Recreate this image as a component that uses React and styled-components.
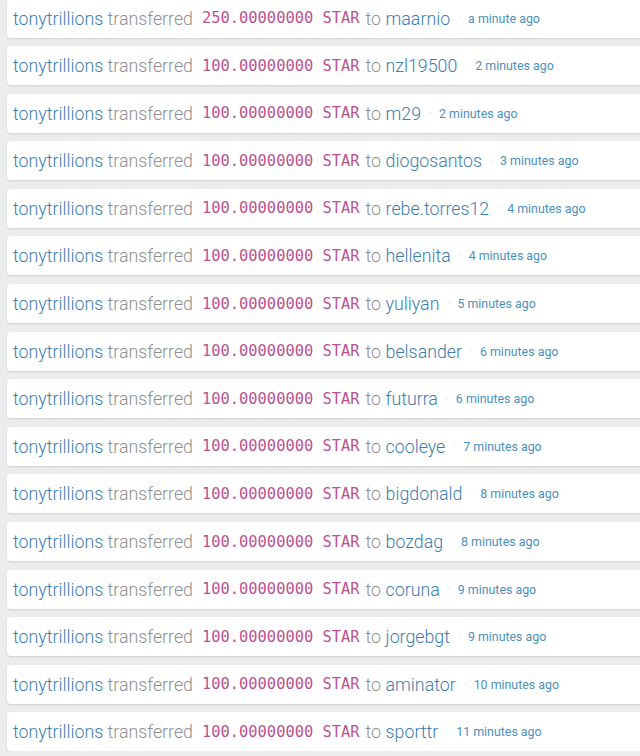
import React from "react";
import styled, { createGlobalStyle } from "styled-components";

const Global = createGlobalStyle`
  html, body { margin: 0; padding: 0; background: #ececec; }
  body { overflow: hidden; }
`;

const List = styled.div`
  display: flex;
  flex-direction: column;
  gap: 8.6px;
  padding: 0 0 0 7px;
  margin-top: -1.5px;
  width: 700px;
`;

const Card = styled.div`
  display: flex;
  align-items: center;
  height: 39px;
  padding-left: 6px;
  background: #fff;
  border-radius: 4px;
  box-shadow: 0 1px 2px rgba(0, 0, 0, 0.12);
  font-family: Roboto, "Liberation Sans", sans-serif;
  font-weight: 300;
  font-size: 17.8px;
  white-space: nowrap;
`;

const User = styled.span`
  color: #3a7db0;
`;

const Muted = styled.span`
  color: #8f8f8f;
  margin-right: ${(p) => (p.$gap ? "4.5px" : "0")};
`;

const Amount = styled.span`
  font-family: "DejaVu Sans Mono", "Liberation Mono", monospace;
  font-weight: 400;
  font-size: 15.4px;
  color: #bb5290;
  margin: 0 6px 0 9px;
`;

const Dot = styled.span`
  color: #c8c8c8;
  font-size: 12px;
  margin: 0 7px 0 8px;
`;

const Time = styled.span`
  color: #4a90c0;
  font-weight: 400;
  font-size: 12.4px;
`;

const rows = [
  ["250.00000000", "maarnio", "a minute ago"],
  ["100.00000000", "nzl19500", "2 minutes ago"],
  ["100.00000000", "m29", "2 minutes ago"],
  ["100.00000000", "diogosantos", "3 minutes ago"],
  ["100.00000000", "rebe.torres12", "4 minutes ago"],
  ["100.00000000", "hellenita", "4 minutes ago"],
  ["100.00000000", "yuliyan", "5 minutes ago"],
  ["100.00000000", "belsander", "6 minutes ago"],
  ["100.00000000", "futurra", "6 minutes ago"],
  ["100.00000000", "cooleye", "7 minutes ago"],
  ["100.00000000", "bigdonald", "8 minutes ago"],
  ["100.00000000", "bozdag", "8 minutes ago"],
  ["100.00000000", "coruna", "9 minutes ago"],
  ["100.00000000", "jorgebgt", "9 minutes ago"],
  ["100.00000000", "aminator", "10 minutes ago"],
  ["100.00000000", "sporttr", "11 minutes ago"],
];

export default function App() {
  return (
    <>
      <Global />
      <List>
        {rows.map(([amt, to, time], i) => (
          <Card key={i}>
            <User>tonytrillions</User>
            <Muted>&nbsp;transferred</Muted>
            <Amount>{amt} STAR</Amount>
            <Muted $gap>to</Muted>
            <User>{to}</User>
            <Dot>·</Dot>
            <Time>{time}</Time>
          </Card>
        ))}
      </List>
    </>
  );
}
